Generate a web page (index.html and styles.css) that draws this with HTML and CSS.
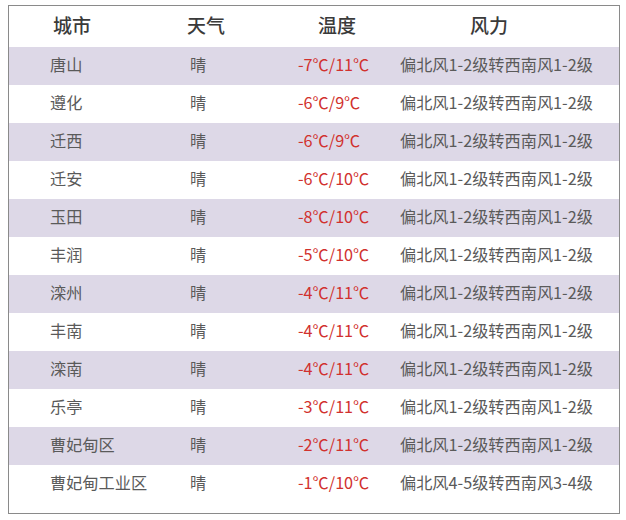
FILE: index.html
```html
<!DOCTYPE html>
<html lang="zh">
<head>
<meta charset="utf-8">
<title>天气</title>
<link rel="stylesheet" href="styles.css">
</head>
<body>
<div class="frame">
  <div class="row head">
    <div class="h h-city">城市</div>
    <div class="h h-wx">天气</div>
    <div class="h h-temp">温度</div>
    <div class="h h-wind">风力</div>
  </div>
  <div class="row alt"><div>唐山</div><div>晴</div><div class="temp">-7℃/11℃</div><div>偏北风1-2级转西南风1-2级</div></div>
  <div class="row"><div>遵化</div><div>晴</div><div class="temp">-6℃/9℃</div><div>偏北风1-2级转西南风1-2级</div></div>
  <div class="row alt"><div>迁西</div><div>晴</div><div class="temp">-6℃/9℃</div><div>偏北风1-2级转西南风1-2级</div></div>
  <div class="row"><div>迁安</div><div>晴</div><div class="temp">-6℃/10℃</div><div>偏北风1-2级转西南风1-2级</div></div>
  <div class="row alt"><div>玉田</div><div>晴</div><div class="temp">-8℃/10℃</div><div>偏北风1-2级转西南风1-2级</div></div>
  <div class="row"><div>丰润</div><div>晴</div><div class="temp">-5℃/10℃</div><div>偏北风1-2级转西南风1-2级</div></div>
  <div class="row alt"><div>滦州</div><div>晴</div><div class="temp">-4℃/11℃</div><div>偏北风1-2级转西南风1-2级</div></div>
  <div class="row"><div>丰南</div><div>晴</div><div class="temp">-4℃/11℃</div><div>偏北风1-2级转西南风1-2级</div></div>
  <div class="row alt"><div>滦南</div><div>晴</div><div class="temp">-4℃/11℃</div><div>偏北风1-2级转西南风1-2级</div></div>
  <div class="row"><div>乐亭</div><div>晴</div><div class="temp">-3℃/11℃</div><div>偏北风1-2级转西南风1-2级</div></div>
  <div class="row alt"><div>曹妃甸区</div><div>晴</div><div class="temp">-2℃/11℃</div><div>偏北风1-2级转西南风1-2级</div></div>
  <div class="row"><div>曹妃甸工业区</div><div>晴</div><div class="temp">-1℃/10℃</div><div>偏北风4-5级转西南风3-4级</div></div>
</div>
</body>
</html>
```

FILE: styles.css
```css
html, body {
  margin: 0;
  padding: 0;
  background: #ffffff;
}

body {
  padding: 5px 0 0 8px;
  font-family: "Noto Sans CJK SC", "Noto Sans", sans-serif;
}

.frame {
  width: 610px;
  height: 507px;
  border: 1px solid #8a8a8a;
  box-sizing: content-box;
}

.row {
  display: grid;
  grid-template-columns: 140px 108px 102px 1fr;
  padding-left: 41px;
  padding-bottom: 5px;
  box-sizing: border-box;
  height: 38px;
  align-items: center;
  font-size: 16.2px;
  line-height: 20px;
  color: #5a5a5a;
  white-space: nowrap;
}

.row.alt {
  background: #ddd8e7;
}

.row.head {
  height: 41px;
  padding-bottom: 4px;
  font-size: 19px;
  color: #3a3a3a;
  font-weight: 500;
}

.h-city { padding-left: 3px; }
.h-wx { margin-left: -3px; }
.h-temp { padding-left: 20px; }
.h-wind { padding-left: 70px; }

.temp {
  color: #d1312e;
}
```
